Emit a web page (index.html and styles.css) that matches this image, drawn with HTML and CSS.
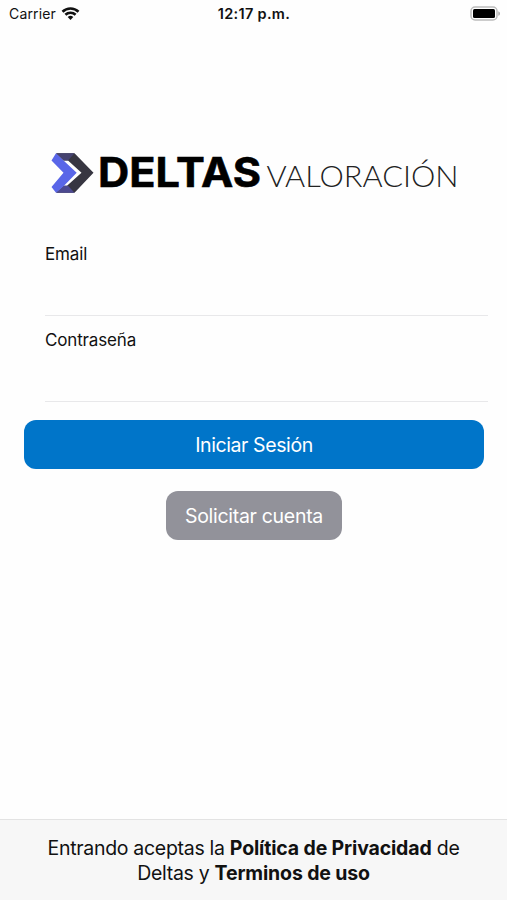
FILE: index.html
```
<!DOCTYPE html>
<html lang="es">
<head>
  <meta charset="UTF-8" />
  <meta name="viewport" content="width=device-width, initial-scale=1.0"/>
  <title>Deltas Valoración</title>
  <link rel="stylesheet" href="styles.css">
</head>
<body>
  <header class="status-bar">
    <div class="carrier">
      <span>Carrier</span>
      <svg width="19" height="14" viewBox="0 0 18 14" fill="none" stroke="#111" stroke-width="2.6">
        <path d="M1 4.700a11.600 11.600 0 0 1 16 0"/>
        <path d="M3.900 7.800a7.300 7.300 0 0 1 10.200 0"/>
        <path d="M6.200 10a4 4 0 0 1 5.600 0L9 13z" fill="#111" stroke="none"/>
      </svg>
    </div>
    <div class="time">12:17 p.m.</div>
    <div class="battery">
      <svg width="31" height="16" viewBox="0 0 31 16">
        <rect x="1" y="1" width="26" height="13" rx="4" fill="#fff" stroke="#bcbcbc" stroke-width="1.5"/>
        <rect x="3" y="3" width="22" height="9" rx="1.5" fill="#000"/>
        <path d="M28.3 5.2c2.2.8 2.2 3.8 0 4.6z" fill="#aaa"/>
      </svg>
    </div>
  </header>

  <main>
    <svg class="logo" width="410" height="46" viewBox="0 0 410 46" role="img" aria-label="Deltas Valoración">
      <path d="M5 3.200h18.500L42.500 22.800 23.500 42.700H5l7.500-7H16L30.500 22.800 17 10.500h-4.500z" fill="#373641"/>
      <path d="M5 3.200h18.500L17 10.500h-4.500z" fill="#45426f"/>
      <path d="M5 42.700h18.500L17 35.700h-4.500z" fill="#4c4990"/>
      <path d="M5 3.200.5 10.500l12 12.300-12 14.200L5 42.700l8-7 12.700-12.900-13.200-12.300z" fill="#5966e8"/>
      <text class="logo-bold" x="47" y="37.300" textLength="163" lengthAdjust="spacingAndGlyphs">DELTAS</text>
      <text class="logo-light" x="215.500" y="37.300" textLength="192" lengthAdjust="spacingAndGlyphs">VALORACIÓN</text>
    </svg>

    <form class="login">
      <div class="field">
        <label for="email">Email</label>
        <input type="email" id="email">
      </div>
      <div class="field">
        <label for="password">Contraseña</label>
        <input type="password" id="password">
      </div>
      <button type="button" class="btn btn-login">Iniciar Sesión</button>
      <button type="button" class="btn btn-request">Solicitar cuenta</button>
    </form>
  </main>

  <footer>
    <div class="terms">Entrando aceptas la <b>Política de Privacidad</b> de</div>
    <div class="terms">Deltas y <b>Terminos de uso</b></div>
  </footer>
</body>
</html>
```
FILE: styles.css
```
* {
  box-sizing: border-box;
}
body {
  margin: 0;
  height: 100vh;
  display: flex;
  flex-direction: column;
  font-family: Inter, sans-serif;
  background: #fefefe;
  color: #111;
  overflow: hidden;
}
.status-bar {
  display: grid;
  grid-template-columns: 1fr auto 1fr;
  align-items: center;
  height: 27px;
  padding: 0 6px 0 9px;
  font-size: 14px;
}
.carrier {
  display: flex;
  align-items: center;
  gap: 5px;
  letter-spacing: 0.15px;
}
.time {
  margin-right: 2px;
  font-size: 14.5px;
  font-weight: 600;
  letter-spacing: 0.3px;
}
.battery {
  display: flex;
  justify-content: flex-end;
}
main {
  flex: 1;
  display: flex;
  flex-direction: column;
}
.logo {
  display: block;
  margin: 123px 0 0 51px;
  overflow: visible;
}
.logo-bold {
  font-size: 40.5px;
  font-weight: 700;
  fill: #000;
  stroke: #000;
  stroke-width: 0.6px;
}
.logo-light {
  font-family: Lato, sans-serif;
  font-size: 28.5px;
  font-weight: 300;
  fill: #222;
}
.login {
  display: flex;
  flex-direction: column;
  margin-top: 47px;
}
.field {
  display: flex;
  flex-direction: column;
  height: 86px;
  margin: 0 19px 0 45px;
}
.field label {
  font-size: 17px;
  line-height: 22px;
  letter-spacing: -0.15px;
}
.field input {
  height: 51px;
  padding: 0;
  border: none;
  border-bottom: 1.5px solid #e8e8ea;
  background: transparent;
  outline: none;
  font: inherit;
}
.btn {
  height: 49px;
  padding: 0;
  border: none;
  border-radius: 12px;
  color: #fff;
  font-family: inherit;
  font-size: 19.5px;
  letter-spacing: -0.4px;
}
.btn-login {
  width: 460px;
  margin: 5px 0 0 24px;
  background: #0075c9;
}
.btn-request {
  width: 176px;
  margin: 22px 0 0 166px;
  background: #92929a;
  letter-spacing: -0.3px;
}
footer {
  height: 81px;
  padding-top: 16px;
  border-top: 1px solid #e3e3e3;
  background: #f7f7f7;
  text-align: center;
  font-size: 19.5px;
  line-height: 25px;
  letter-spacing: -0.3px;
}
.terms b {
  font-weight: 700;
  letter-spacing: -0.15px;
}
```
